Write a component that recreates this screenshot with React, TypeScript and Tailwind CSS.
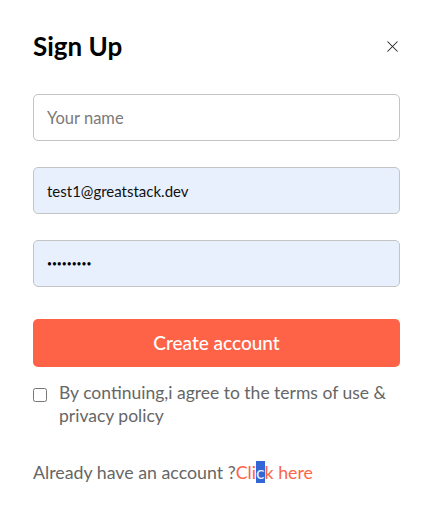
import { X } from 'lucide-react';

export default function App() {
  return (
    <div
      className="w-[435px] h-[511px] bg-white pl-[33px] pr-[35px] pt-[30px]"
      style={{ fontFamily: 'Lato, "Noto Sans", sans-serif' }}
    >
      <div className="flex items-center justify-between h-[32px]">
        <h1 className="text-[26px] font-bold text-black leading-none">Sign Up</h1>
        <X size={19} strokeWidth={1.3} className="text-[#222] -mr-[2px]" />
      </div>

      <form className="mt-[32px] flex flex-col gap-[26px]" onSubmit={(e) => e.preventDefault()}>
        <input
          type="text"
          placeholder="Your name"
          className="h-[47px] w-full rounded-[5px] border border-[#c4c4c4] px-[13px] text-[16.5px] text-black placeholder:text-[#7a7a7a] outline-none"
        />
        <input
          type="email"
          defaultValue="test1@greatstack.dev"
          className="h-[47px] w-full rounded-[5px] border border-[#c4c4c4] bg-[#e8f0fe] px-[13px] text-[15px] text-[#111] outline-none"
        />
        <input
          type="password"
          defaultValue="password1"
          className="h-[47px] w-full rounded-[5px] border border-[#c4c4c4] bg-[#e8f0fe] px-[13px] text-[8.5px] text-black outline-none"
        />
        <button
          type="submit"
          className="mt-[6px] h-[48px] w-full rounded-[5px] bg-[#ff6347] text-[19px] font-medium text-white"
        >
          Create account
        </button>
      </form>

      <div className="mt-[14px] flex items-start gap-[12px]">
        <input type="checkbox" className="mt-[7px] h-[14px] w-[14px] shrink-0" />
        <p className="text-[17.5px] leading-[23px] text-[#666]">
          By continuing,i agree to the terms of use &amp; privacy policy
        </p>
      </div>

      <p className="mt-[32px] text-[17.8px] text-[#666]">
        Already have an account ?
        <span className="text-[#ff6347] cursor-pointer">
          Cli<span className="bg-[#3367d6] text-[#e8f0fe]">c</span>k here
        </span>
      </p>
    </div>
  );
}
